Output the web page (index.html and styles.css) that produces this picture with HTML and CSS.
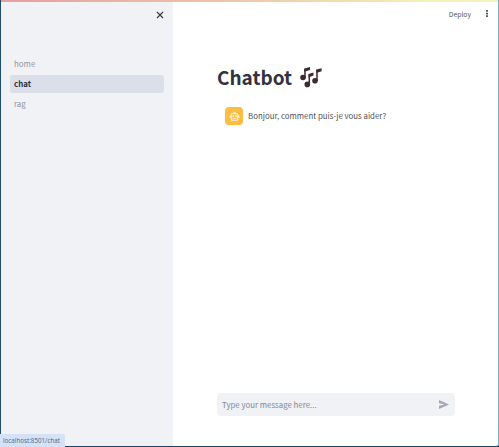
FILE: index.html
```html
<!DOCTYPE html>
<html lang="fr">
<head>
<meta charset="utf-8">
<title>Chatbot</title>
<link rel="stylesheet" href="styles.css">
</head>
<body>
<div class="app">
  <div class="decoration"></div>
  <aside class="sidebar">
    <button class="close" aria-label="Close">
      <svg viewBox="0 0 8 8"><path d="M1 1l6 6M7 1l-6 6"/></svg>
    </button>
    <nav class="nav">
      <a class="nav-item">home</a>
      <a class="nav-item active">chat</a>
      <a class="nav-item">rag</a>
    </nav>
  </aside>
  <main class="main">
    <header class="toolbar">
      <span class="deploy">Deploy</span>
      <svg class="dots" viewBox="0 0 4 8"><path d="M1 0h2v2H1zM1 3h2v2H1zM1 6h2v2H1z"/></svg>
    </header>
    <section class="content">
      <h1 class="title"><span class="title-text">Chatbot</span>
        <svg class="notes" viewBox="0 0 22 21">
          <path class="stem" d="M5 10.500V2M9.300 17.500V7.500M17 14V3"/>
          <path class="beam" d="M4.200 1.400L10 0v3L4.200 4.800zM8.500 7l5-1.400v3L8.500 10.400zM16.200 2.600L21.600 1.200v3l-5.400 1.700z"/>
          <circle cx="3" cy="10.500" r="2.800"/>
          <circle cx="7.300" cy="17.400" r="2.800"/>
          <circle cx="15" cy="13.800" r="2.800"/>
        </svg>
      </h1>
      <div class="message">
        <span class="avatar">
          <svg viewBox="0 0 24 24"><path fill-rule="evenodd" d="M20 9V7a2 2 0 0 0-2-2h-3a3 3 0 0 0-6 0H6a2 2 0 0 0-2 2v2a3 3 0 0 0 0 6v4a2 2 0 0 0 2 2h12a2 2 0 0 0 2-2v-4a3 3 0 0 0 0-6zM6 7h12v12H6zM7.500 11.500a1.500 1.500 0 1 0 3 0a1.500 1.500 0 1 0-3 0zM13.500 11.500a1.500 1.500 0 1 0 3 0a1.500 1.500 0 1 0-3 0z"/><path d="M7.500 10h3v3h-3zM13.500 10h3v3h-3zM8 15h8v2H8z"/></svg>
        </span>
        <p class="text">Bonjour, comment puis-je vous aider?</p>
      </div>
    </section>
    <div class="chat-input">
      <span class="placeholder">Type your message here...</span>
      <svg class="send" viewBox="0 0 10 9"><path d="M0 0l10 4.500L0 9V5.700l5.500-1.200L0 3.300z"/></svg>
    </div>
  </main>
  <div class="status">localhost:8501/chat</div>
</div>
</body>
</html>
```
FILE: styles.css
```css
* { box-sizing: border-box; }
body {
  margin: 0;
  height: 447px;
  overflow: hidden;
  background: #0b1d2e;
  font-family: "Noto Sans CJK SC", "Noto Sans", sans-serif;
  color: #31333f;
}
.app {
  position: relative;
  display: grid;
  grid-template-columns: 172px 1fr;
  grid-template-rows: 2px 1fr;
  height: 447px;
  border-left: 1px solid #244c70;
  border-right: 1px solid #77b0c9;
  border-bottom: 1px solid #17466b;
  border-bottom-right-radius: 3px;
  background: #fff;
}
.decoration {
  grid-column: 1 / -1;
  background: linear-gradient(90deg, #e5a09f, #edc4a8 45%, #f5efba 85%, #f6f1bd);
}
.sidebar {
  display: flex;
  flex-direction: column;
  background: #f0f2f6;
  padding: 9px 9px 0;
}
.close {
  align-self: flex-end;
  width: 8px;
  height: 8px;
  padding: 0;
  border: 0;
  background: none;
}
.close svg {
  display: block;
  width: 8px;
  height: 8px;
  fill: none;
  stroke: #35373f;
  stroke-width: 1.1;
}
.nav {
  display: flex;
  flex-direction: column;
  gap: 2px;
  margin-top: 36px;
}
.nav-item {
  height: 18px;
  padding-left: 4px;
  border-radius: 3px;
  font-size: 7.9px;
  line-height: 17px;
  color: #92959e;
}
.active {
  background: #dadfea;
  color: #31333f;
  font-weight: 700;
}
.main {
  display: flex;
  flex-direction: column;
  min-width: 0;
}
.toolbar {
  display: flex;
  justify-content: flex-end;
  align-items: center;
  gap: 14px;
  height: 23px;
  padding-right: 9px;
}
.deploy {
  font-size: 6.8px;
  line-height: 12px;
  color: #555761;
}
.dots {
  width: 4px;
  height: 7px;
  fill: #41434d;
}
.content {
  flex: 1;
  padding: 37px 44px 0;
}
.title {
  display: flex;
  align-items: center;
  gap: 8px;
  height: 30px;
  margin: 0;
  font-size: 19px;
  line-height: 30px;
  font-weight: 700;
}
.notes {
  width: 22px;
  height: 21px;
  fill: #402a32;
}
.stem {
  fill: none;
  stroke: #402a32;
  stroke-width: 1.5;
}
.message {
  display: flex;
  align-items: center;
  gap: 5px;
  margin-top: 15px;
  padding-left: 8px;
}
.avatar {
  display: grid;
  place-items: center;
  width: 18px;
  height: 18px;
  border-radius: 4px;
  background: #fdbd45;
}
.avatar svg {
  width: 11px;
  height: 11px;
  fill: #fff3d6;
}
.text {
  margin: 0;
  font-size: 7.87px;
  line-height: 14px;
  color: #50525c;
}
.chat-input {
  display: flex;
  align-items: center;
  justify-content: space-between;
  width: 238px;
  height: 23px;
  margin: 0 0 30px 44px;
  padding: 0 6px 0 5px;
  border-radius: 4px;
  background: #f0f2f6;
}
.placeholder {
  font-size: 7.85px;
  line-height: 14px;
  color: #858997;
}
.send {
  width: 10px;
  height: 9px;
  fill: #a3a8b8;
}
.status {
  position: absolute;
  left: -1px;
  bottom: -1px;
  width: 65px;
  height: 13px;
  padding-left: 3px;
  border-top-right-radius: 2px;
  background: #d3e1f9;
  font-family: "Open Sans", sans-serif;
  font-size: 6.25px;
  line-height: 13px;
  color: #56657c;
  white-space: nowrap;
}
```
